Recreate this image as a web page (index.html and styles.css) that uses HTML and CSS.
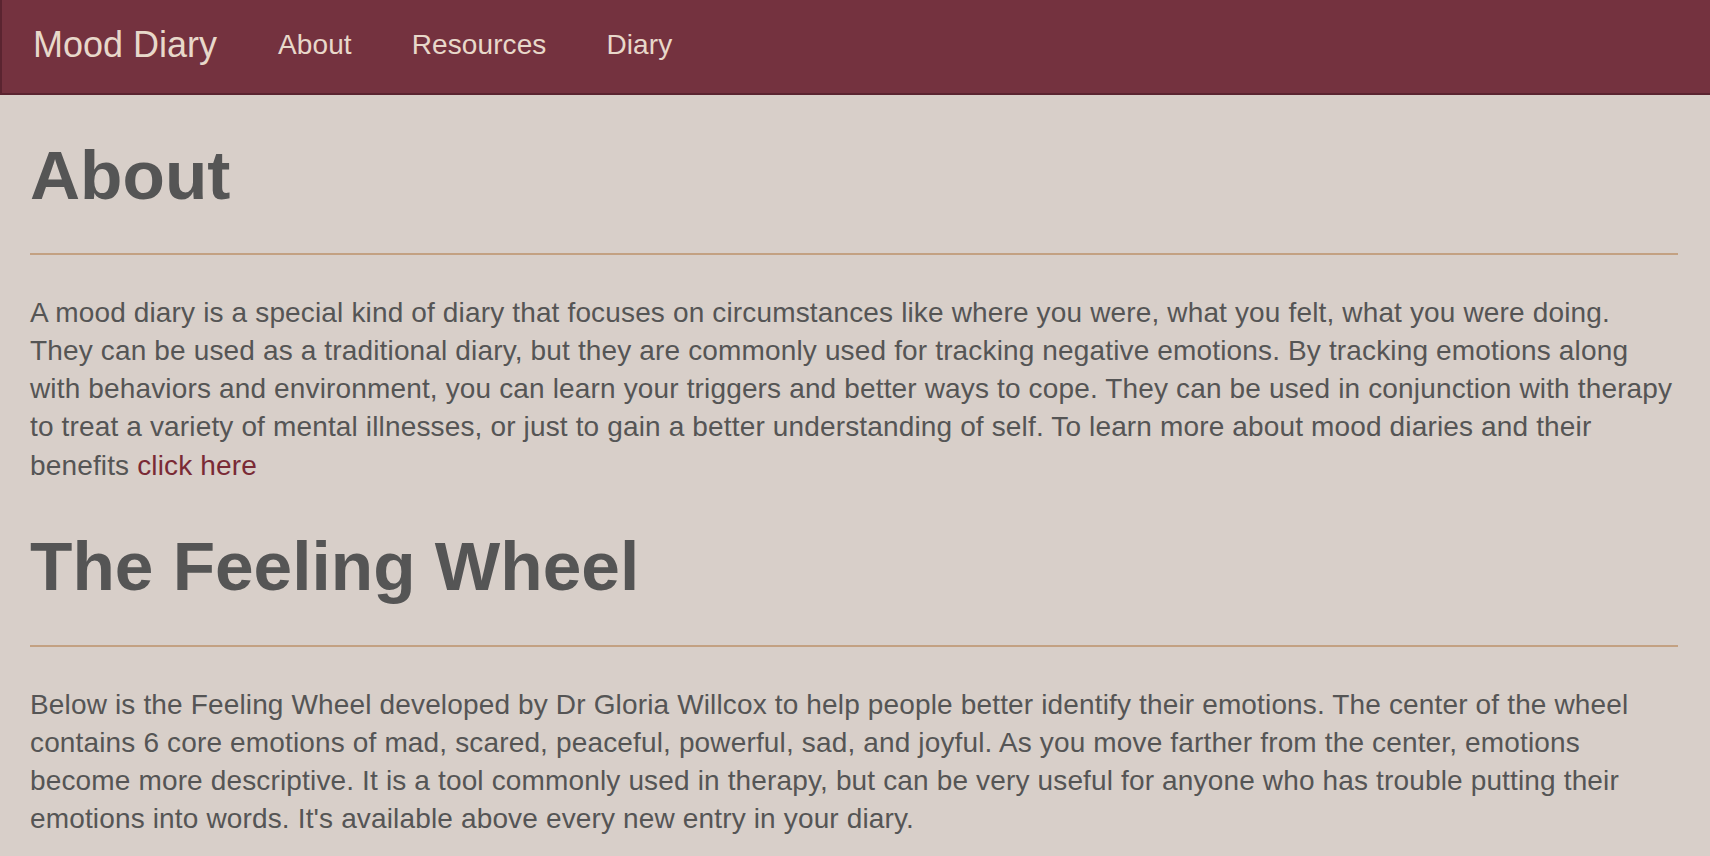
FILE: index.html
```html
<!DOCTYPE html>
<html lang="en">
<head>
<meta charset="utf-8">
<title>Mood Diary</title>
<link rel="stylesheet" href="styles.css">
</head>
<body>
<nav class="navbar">
  <a class="brand" href="#">Mood Diary</a>
  <ul class="nav-links">
    <li><a href="#">About</a></li>
    <li><a href="#">Resources</a></li>
    <li><a href="#">Diary</a></li>
  </ul>
</nav>
<main class="content">
  <h1 class="page-title">About</h1>
  <hr class="rule">
  <p class="text">A mood diary is a special kind of diary that focuses on circumstances like where you were, what you felt, what you were doing. They can be used as a traditional diary, but they are commonly used for tracking negative emotions. By tracking emotions along with behaviors and environment, you can learn your triggers and better ways to cope. They can be used in conjunction with therapy to treat a variety of mental illnesses, or just to gain a better understanding of self. To learn more about mood diaries and their benefits <a class="link" href="#">click here</a></p>
  <h1 class="page-title">The Feeling Wheel</h1>
  <hr class="rule">
  <p class="text">Below is the Feeling Wheel developed by Dr Gloria Willcox to help people better identify their emotions. The center of the wheel contains 6 core emotions of mad, scared, peaceful, powerful, sad, and joyful. As you move farther from the center, emotions become more descriptive. It is a tool commonly used in therapy, but can be very useful for anyone who has trouble putting their emotions into words. It's available above every new entry in your diary.</p>
</main>
</body>
</html>
```
FILE: styles.css
```css
* { box-sizing: border-box; }
html, body {
  margin: 0;
  padding: 0;
  background: #d8cfc9;
  font-family: "Liberation Sans", Arial, Helvetica, sans-serif;
  color: #555555;
}
.navbar {
  display: flex;
  align-items: center;
  height: 95px;
  background: #74323f;
  border-bottom: 2px solid #5a2430;
  border-left: 2px solid #5a2430;
  padding: 0 0 4px 31px;
}
.brand {
  font-size: 36px;
  color: #e8d8ca;
  text-decoration: none;
  margin-right: 61px;
}
.nav-links {
  display: flex;
  list-style: none;
  margin: 0;
  padding: 0;
  gap: 60px;
}
.nav-links a {
  font-size: 28px;
  letter-spacing: 0.1px;
  color: #e8d8ca;
  text-decoration: none;
}
.content {
  padding: 0 32px 0 30px;
}
.page-title {
  font-size: 69.4px;
  font-weight: bold;
  line-height: 1.1;
  margin: 0;
  padding-top: 41.5px;
}
.rule {
  border: 0;
  border-top: 2px solid #c3a182;
  margin: 40px 0 39px;
}
.text {
  font-size: 28px;
  letter-spacing: 0.15px;
  line-height: 38.2px;
  margin: 0 0 2px;
}
.link {
  color: #7a2a35;
  text-decoration: none;
}
```
